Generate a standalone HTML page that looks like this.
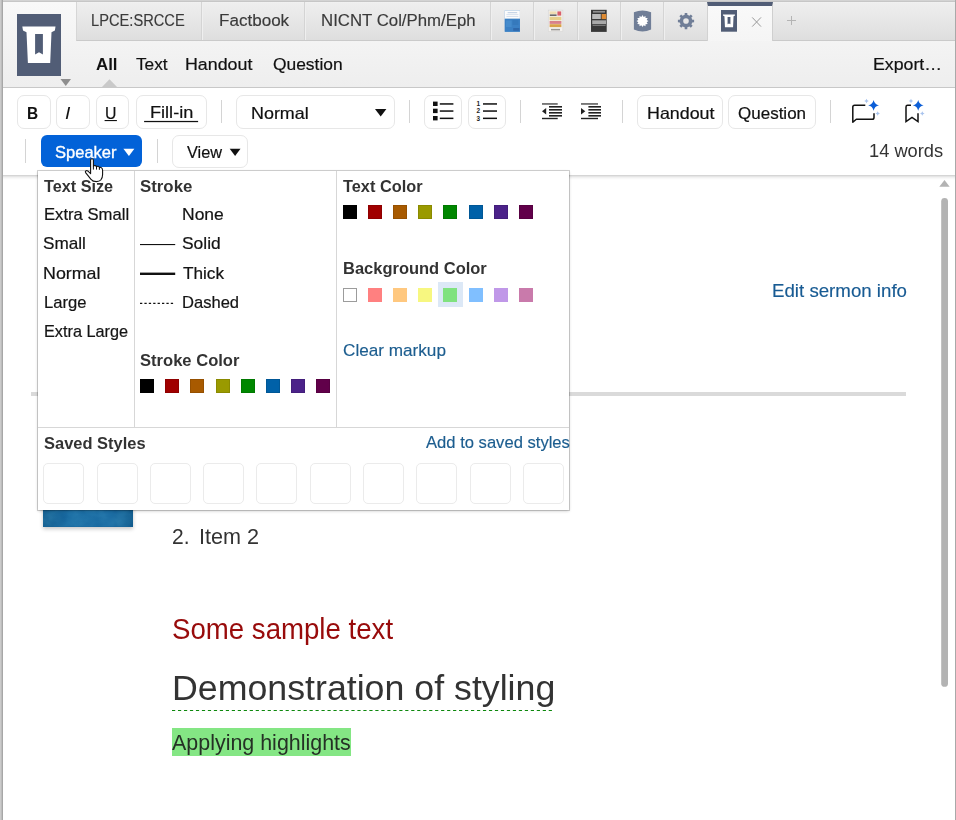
<!DOCTYPE html>
<html lang="en"><head><meta charset="utf-8"><title>Sermon</title>
<style>
html,body{margin:0;padding:0}
body{width:956px;height:820px;overflow:hidden;position:relative;background:#fff;font-family:"Liberation Sans",sans-serif}
.t{position:absolute;white-space:nowrap;line-height:1;transform-origin:0 0;display:block;z-index:20}
.a{position:absolute;box-sizing:border-box}
svg{position:absolute;overflow:visible}
/* window chrome */
#bl{left:0;top:0;width:3px;height:820px;background:linear-gradient(90deg,#d2d2d2 0,#bdbdbd 50%,#9c9c9c 100%);z-index:60}
#bt{left:0;top:0;width:956px;height:2px;background:linear-gradient(#d3d3d3 50%,#c6c6c6 50%);z-index:59}
#br{left:955px;top:0;width:1px;height:820px;background:#a9a9a9;z-index:60}
#hdr{left:3px;top:2px;width:952px;height:86px;background:linear-gradient(#f8f8f8,#eeeeee);border-bottom:1px solid #c8c8c8}
#tabs{left:76px;top:2px;width:879px;height:39px;background:linear-gradient(#f2f2f2 0,#eeeeee 4%,#dedede 100%);border-bottom:1px solid #cacaca;border-left:1px solid #d6d6d6}
.sep{top:2px;width:2px;height:38px;background:linear-gradient(90deg,#d4d4d4 50%,#efefef 50%)}
#atab{left:707px;top:2px;width:66px;height:39px;background:linear-gradient(#f9f9f9,#f5f5f5);border-top:4px solid #515d76;border-left:1px solid #d2d2d2;border-right:1px solid #cfcfcf}
/* toolbar */
.btn{border:1px solid #e7e7e7;border-radius:7px;background:#fff}
.vs{width:1px;background:#d4d4d4}
#tbline{left:3px;top:175px;width:952px;height:5px;background:linear-gradient(#d5d5d5 0,#d5d5d5 20%,#e5e5e5 20%,#e5e5e5 40%,#f1f1f1 40%,#f1f1f1 60%,#f8f8f8 60%,#f8f8f8 80%,#fdfdfd 80%)}
/* panel */
#panel{left:38px;top:171px;width:531px;height:339px;background:#fff;box-shadow:0 0 0 1px rgba(0,0,0,.17),0 1px 3px rgba(0,0,0,.22);z-index:10}
.pl{background:#d7d7d7;z-index:11}
.sw{width:14px;height:14px;z-index:12;box-shadow:inset 0 0 0 1px rgba(0,0,0,.10)}
.sv{width:41px;height:41px;top:463.4px;border:1px solid #ebebeb;border-radius:5px;background:#fff;z-index:12}

</style></head>
<body>
<div class="a" id="hdr"></div>
<div class="a" id="tabs"></div>
<div class="a sep" style="left:201px"></div>
<div class="a sep" style="left:304px"></div>
<div class="a sep" style="left:490px"></div>
<div class="a sep" style="left:533px"></div>
<div class="a sep" style="left:577px"></div>
<div class="a sep" style="left:620px"></div>
<div class="a sep" style="left:663px"></div>
<div class="a" id="atab"></div>
<!-- big app icon -->
<svg width="956" height="100" style="left:0;top:0" viewBox="0 0 956 100">
<rect x="17" y="14" width="44" height="62" fill="#515d76"/>
<path fill="#fff" d="M22.3 26.6H55.5L54.9 30.6L51.5 32.2L50.2 63H27.9L26.5 32.2L23 30.6Z"/><path fill="#515d76" d="M35.1 33.9H42.9V54.6L39 52.3L35.1 54.6Z"/>
<path fill="#8e8e8e" d="M60.5 79H71L65.75 86Z"/>
<path fill="#c9c9c9" d="M102 87L109.5 79.2L117 87Z"/>
<!-- tab book icons -->
<defs><filter id="bk" x="-10%" y="-10%" width="120%" height="120%"><feGaussianBlur stdDeviation=".45"/></filter></defs>
<g filter="url(#bk)">
<rect x="504.8" y="10.4" width="15.1" height="21.3" fill="#3c82c6"/>
<rect x="504.8" y="10.4" width="15.1" height="8.4" fill="#fcfcfc"/>
<rect x="507.6" y="12.2" width="9.6" height="1" fill="#b9cbe2"/><rect x="506.4" y="14.2" width="12" height=".9" fill="#d3deed"/><rect x="506.4" y="16" width="12" height=".9" fill="#d3deed"/>
<rect x="504.8" y="18.8" width="15.1" height="12.9" fill="#3b80c4"/>
<rect x="513.2" y="28" width="6.2" height="2.8" fill="#2e68ab"/><rect x="506" y="20.5" width="5.6" height="6.5" fill="#4f93d3" opacity=".55"/><rect x="512.4" y="20" width="6" height="5" fill="#3374b8" opacity=".6"/>
<rect x="548.2" y="10.1" width="14.7" height="21.6" fill="#f3f1ee" stroke="#cfcfcf" stroke-width=".5"/>
<rect x="549.6" y="11.4" width="7" height="2.6" fill="#efddb2"/><rect x="557.4" y="11.4" width="3.8" height="4.2" fill="#d9616b"/>
<rect x="549.8" y="14.5" width="6.8" height="1.3" fill="#4a4646"/>
<rect x="549.6" y="16.8" width="11.8" height="3.5" fill="#e7cf8a"/>
<rect x="549.6" y="21" width="11.8" height="2.9" fill="#d9818a"/>
<rect x="549.6" y="24.2" width="11.8" height="2.9" fill="#d9a24a"/>
<rect x="551" y="28.9" width="9" height="1.5" fill="#9a9896"/>
<rect x="591" y="9.8" width="15.7" height="22.1" fill="#383838"/>
<rect x="593" y="10.9" width="12" height="1.7" fill="#8f8f8f"/>
<rect x="592.2" y="14" width="8.6" height="5" fill="#b9b9b9"/><rect x="601.6" y="14" width="4.7" height="5.1" fill="#dd8a33"/>
<rect x="592.2" y="20.3" width="13.8" height="3.9" fill="#a9a9a9"/><rect x="592.6" y="25" width="13" height="1" fill="#777"/>
</g>
<!-- shield w/ sun -->
<path fill="#707e97" d="M633.9 12.3Q642.5 8.6 651.1 12.3V29.5Q642.5 33.4 633.9 29.5Z"/>
<path fill="#fff" d="M642.50 15.10 L643.61 16.95 L645.50 15.90 L645.54 18.06 L647.70 18.10 L646.65 19.99 L648.50 21.10 L646.65 22.21 L647.70 24.10 L645.54 24.14 L645.50 26.30 L643.61 25.25 L642.50 27.10 L641.39 25.25 L639.50 26.30 L639.46 24.14 L637.30 24.10 L638.35 22.21 L636.50 21.10 L638.35 19.99 L637.30 18.10 L639.46 18.06 L639.50 15.90 L641.39 16.95Z"/>
<!-- gear -->
<path fill="#707e97" fill-rule="evenodd" d="M684.65 14.79 L684.72 12.95 L687.28 12.95 L687.35 14.79 L689.47 15.67 L690.82 14.42 L692.63 16.23 L691.38 17.58 L692.26 19.70 L694.10 19.77 L694.10 22.33 L692.26 22.40 L691.38 24.52 L692.63 25.87 L690.82 27.68 L689.47 26.43 L687.35 27.31 L687.28 29.15 L684.72 29.15 L684.65 27.31 L682.53 26.43 L681.18 27.68 L679.37 25.87 L680.62 24.52 L679.74 22.40 L677.90 22.33 L677.90 19.77 L679.74 19.70 L680.62 17.58 L679.37 16.23 L681.18 14.42 L682.53 15.67Z M683.20 21.05a2.8 2.8 0 1 0 5.6 0a2.8 2.8 0 1 0 -5.6 0Z"/>
<!-- active tab icon -->
<g transform="translate(721 10) scale(.3636 .35) translate(-17 -14)"><rect x="17" y="14" width="44" height="62" fill="#515d76"/><path fill="#fff" d="M22.3 26.6H55.5L54.9 30.6L51.5 32.2L50.2 63H27.9L26.5 32.2L23 30.6Z"/><path fill="#515d76" d="M35.1 33.9H42.9V54.6L39 52.3L35.1 54.6Z"/></g>
<path stroke="#999" stroke-width="1" fill="none" d="M752.2 17.4L761 26.6M761 17.4L752.2 26.6"/>
<path stroke="#b4b4b4" stroke-width="1" fill="none" d="M787 20.5H796M791.5 16V25"/>
</svg>
<div class="a" id="tbline"></div>
<div class="a btn" style="left:17px;top:95px;width:34px;height:34px"></div>
<div class="a btn" style="left:56px;top:95px;width:34px;height:34px"></div>
<div class="a btn" style="left:96px;top:95px;width:33px;height:34px"></div>
<div class="a btn" style="left:136px;top:95px;width:71px;height:34px"></div>
<div class="a vs" style="left:221px;top:100px;height:23px"></div>
<div class="a btn" style="left:236px;top:95px;width:159px;height:34px"></div>
<div class="a vs" style="left:409px;top:100px;height:23px"></div>
<div class="a btn" style="left:424px;top:95px;width:38px;height:34px"></div>
<div class="a btn" style="left:468px;top:95px;width:38px;height:34px"></div>
<div class="a vs" style="left:520px;top:100px;height:23px"></div>
<div class="a vs" style="left:622px;top:100px;height:23px"></div>
<div class="a btn" style="left:637px;top:95px;width:86px;height:34px"></div>
<div class="a btn" style="left:728px;top:95px;width:88px;height:34px"></div>
<div class="a vs" style="left:830px;top:100px;height:23px"></div>
<div class="a vs" style="left:25px;top:139px;height:24px"></div>
<div class="a" style="left:41px;top:135px;width:100.5px;height:31.6px;background:#0262d8;border-radius:6px"></div>
<div class="a vs" style="left:157px;top:139px;height:24px"></div>
<div class="a btn" style="left:172.4px;top:135px;width:75.4px;height:32.6px"></div>
<svg width="956" height="90" style="left:0;top:90px" viewBox="0 90 956 90">
<!-- U underline, Fill-in underline -->
<rect x="104.6" y="120" width="12.3" height="1.1" fill="#111"/>
<rect x="144.1" y="120.9" width="54" height="1.25" fill="#111"/>
<!-- dropdown arrows -->
<path fill="#111" d="M375 109H386.4L380.7 116.4Z"/>
<path fill="#fff" d="M123.4 148.8H134.4L128.9 156Z"/>
<path fill="#111" d="M229.7 148.8H240.5L235.1 156Z"/>
<!-- bullet list -->
<g fill="#111"><rect x="433" y="101.6" width="4.6" height="4.4"/><rect x="433" y="108.7" width="4.6" height="4.4"/><rect x="433" y="116" width="4.6" height="4.4"/>
<rect x="439.8" y="103.2" width="13.6" height="1.5"/><rect x="439.8" y="110.3" width="13.6" height="1.5"/><rect x="439.8" y="117.6" width="13.6" height="1.5"/>
<!-- numbered list -->
<rect x="483" y="103.2" width="14" height="1.5"/><rect x="483" y="110.3" width="14" height="1.5"/><rect x="483" y="117.6" width="14" height="1.5"/></g>
<g font-family="Liberation Sans, sans-serif" font-weight="bold" font-size="6.4" fill="#222"><text x="476.6" y="106.2">1</text><text x="476.6" y="113.4">2</text><text x="476.6" y="120.6">3</text></g>
<!-- outdent -->
<g fill="#222"><rect x="542" y="103.2" width="15.7" height="1.5" fill="#555"/><rect x="542" y="117.8" width="15.7" height="1.4"/>
<rect x="549" y="106" width="13" height="1.6"/><rect x="549" y="109" width="13" height="1.6"/><rect x="549" y="112" width="13" height="1.6"/><rect x="549" y="115" width="13" height="1.6"/>
<path d="M542 111.3L546.2 108V114.6Z"/>
<!-- indent -->
<rect x="581" y="103.2" width="17" height="1.5" fill="#555"/><rect x="581" y="117.8" width="17" height="1.4"/>
<rect x="588.4" y="106" width="12.6" height="1.6"/><rect x="588.4" y="109" width="12.6" height="1.6"/><rect x="588.4" y="112" width="12.6" height="1.6"/><rect x="588.4" y="115" width="12.6" height="1.6"/>
<path d="M585.3 111.3L581 108V114.6Z"/></g>
<!-- chat + sparkle -->
<path fill="none" stroke="#111" stroke-width="1.5" stroke-linejoin="round" d="M865.3 105.3H854.6Q852.8 105.3 852.8 107.1V122.3L856.3 119.3H872.2Q874 119.3 874 117.5V113.2"/>
<path fill="#0b5ed7" d="M873.6 99.89999999999999Q874.572 104.328 879.0 105.3Q874.572 106.27199999999999 873.6 110.7Q872.628 106.27199999999999 868.2 105.3Q872.628 104.328 873.6 99.89999999999999Z"/><path fill="#a9c4ee" d="M866.5 98.7Q866.914 100.586 868.8 101Q866.914 101.414 866.5 103.3Q866.086 101.414 864.2 101Q866.086 100.586 866.5 98.7Z"/><path fill="#a9c4ee" d="M877.7 111.2Q878.114 113.086 880.0 113.5Q878.114 113.914 877.7 115.8Q877.2860000000001 113.914 875.4000000000001 113.5Q877.2860000000001 113.086 877.7 111.2Z"/>
<!-- bookmark + sparkle -->
<path fill="none" stroke="#111" stroke-width="1.5" stroke-linejoin="miter" d="M911 105.3H907.6Q906 105.3 906 106.9V121.6L912 117.4L918 121.6V113.2"/>
<path fill="#0b5ed7" d="M918.2 99.89999999999999Q919.172 104.328 923.6 105.3Q919.172 106.27199999999999 918.2 110.7Q917.2280000000001 106.27199999999999 912.8000000000001 105.3Q917.2280000000001 104.328 918.2 99.89999999999999Z"/><path fill="#a9c4ee" d="M911 98.7Q911.414 100.586 913.3 101Q911.414 101.414 911 103.3Q910.586 101.414 908.7 101Q910.586 100.586 911 98.7Z"/><path fill="#a9c4ee" d="M922.3 111.2Q922.7139999999999 113.086 924.5999999999999 113.5Q922.7139999999999 113.914 922.3 115.8Q921.886 113.914 920.0 113.5Q921.886 113.086 922.3 111.2Z"/>
</svg>
<!-- document area -->
<div class="a" style="left:31px;top:392px;width:875px;height:3.5px;background:#dadada"></div>
<div class="a" style="left:43px;top:440px;width:90px;height:86.7px;background:#125f96;box-shadow:0 2px 4px rgba(0,0,0,.22)"></div>
<svg width="90" height="87" style="left:43px;top:440px" viewBox="0 0 90 87"><defs><filter id="tx" x="0" y="0" width="100%" height="100%"><feTurbulence type="fractalNoise" baseFrequency=".07 .09" numOctaves="3" seed="7" result="n"/><feColorMatrix in="n" type="matrix" values="0 0 0 0 .07  0 0 0 0 .37  0 0 0 0 .6  .9 .9 0 0 -.38"/><feComposite operator="in" in2="SourceGraphic"/></filter>
<linearGradient id="bg1" x1="0" x2="1"><stop offset="0" stop-color="#0e5688"/><stop offset=".3" stop-color="#15669e"/><stop offset=".75" stop-color="#17679f"/><stop offset="1" stop-color="#0e5789"/></linearGradient></defs>
<rect width="90" height="86.7" fill="url(#bg1)"/><rect width="90" height="86.7" fill="#fff" filter="url(#tx)" opacity=".32"/></svg>
<div class="a" style="left:171.8px;top:727.8px;width:179.7px;height:28.2px;background:#84e684"></div>
<svg width="400" height="4" style="left:172px;top:708px" viewBox="172 708 400 4"><path d="M172 710.5H553.5" stroke="#0d880d" stroke-width="1.2" stroke-dasharray="3.2 2.78" fill="none"/></svg>
<!-- scrollbar -->
<svg width="20" height="520" style="left:936px;top:176px" viewBox="936 176 20 520"><path fill="#b3b3b3" d="M939.3 186.8L944.5 180L949.7 186.8Z"/><rect x="941.2" y="198" width="6.8" height="488.8" rx="3.4" fill="#b3b3b3"/></svg>
<!-- style dropdown panel -->
<div class="a" id="panel"></div>
<div class="a pl" style="left:134px;top:171px;width:1px;height:256px"></div>
<div class="a pl" style="left:336px;top:171px;width:1px;height:256px"></div>
<div class="a pl" style="left:38px;top:427px;width:531px;height:1px"></div>
<div class="a" style="left:438px;top:282px;width:25px;height:25px;background:#dce8f6;z-index:11"></div>
<div class="a sw" style="left:140px;top:379px;background:#000000"></div>
<div class="a sw" style="left:165px;top:379px;background:#a00000"></div>
<div class="a sw" style="left:190px;top:379px;background:#a85a00"></div>
<div class="a sw" style="left:216px;top:379px;background:#9a9a00"></div>
<div class="a sw" style="left:241px;top:379px;background:#008700"></div>
<div class="a sw" style="left:266px;top:379px;background:#0061a8"></div>
<div class="a sw" style="left:291px;top:379px;background:#4b2289"></div>
<div class="a sw" style="left:316px;top:379px;background:#61004a"></div>
<div class="a sw" style="left:343px;top:205px;background:#000000"></div>
<div class="a sw" style="left:368px;top:205px;background:#a00000"></div>
<div class="a sw" style="left:393px;top:205px;background:#a85a00"></div>
<div class="a sw" style="left:418px;top:205px;background:#9a9a00"></div>
<div class="a sw" style="left:443px;top:205px;background:#008700"></div>
<div class="a sw" style="left:469px;top:205px;background:#0061a8"></div>
<div class="a sw" style="left:494px;top:205px;background:#4b2289"></div>
<div class="a sw" style="left:519px;top:205px;background:#61004a"></div>
<div class="a sw" style="left:343px;top:288px;background:#ffffff;border:1px solid #9c9c9c;box-shadow:none"></div>
<div class="a sw" style="left:368px;top:288px;background:#ff8080;box-shadow:none"></div>
<div class="a sw" style="left:393px;top:288px;background:#ffc87f;box-shadow:none"></div>
<div class="a sw" style="left:418px;top:288px;background:#f7f780;box-shadow:none"></div>
<div class="a sw" style="left:443px;top:288px;background:#80e27f;box-shadow:none"></div>
<div class="a sw" style="left:469px;top:288px;background:#80bfff;box-shadow:none"></div>
<div class="a sw" style="left:494px;top:288px;background:#c098e8;box-shadow:none"></div>
<div class="a sw" style="left:519px;top:288px;background:#c97aab;box-shadow:none"></div>
<svg width="40" height="70" style="left:140px;top:240px;z-index:12" viewBox="140 240 40 70">
<rect x="140" y="244" width="35.2" height="1.1" fill="#111"/>
<rect x="140" y="272.6" width="35.2" height="2.4" fill="#111"/>
<path d="M140 303.3H175.2" stroke="#111" stroke-width="1.3" stroke-dasharray="2.3 2.1" fill="none"/>
</svg>
<div class="a sv" style="left:43.3px"></div>
<div class="a sv" style="left:96.6px"></div>
<div class="a sv" style="left:149.8px"></div>
<div class="a sv" style="left:203.1px"></div>
<div class="a sv" style="left:256.4px"></div>
<div class="a sv" style="left:309.7px"></div>
<div class="a sv" style="left:362.9px"></div>
<div class="a sv" style="left:416.2px"></div>
<div class="a sv" style="left:469.5px"></div>
<div class="a sv" style="left:522.7px"></div>
<!-- hand cursor -->
<svg width="22" height="26" style="left:84px;top:157px;z-index:50" viewBox="84 157 22 26">
<path fill="#fff" stroke="#111" stroke-width="1.1" stroke-linejoin="round" d="M90.6 160.2Q90.6 158.8 92 158.8Q93.4 158.8 93.4 160.2V166.6Q94 165.4 95.2 165.6Q96.4 165.8 96.5 167Q97.1 166 98.2 166.3Q99.3 166.6 99.4 167.8Q100 167 101 167.4Q102.6 168 102.6 170.2V174.5Q102.6 178 100.8 180Q99.3 181.6 96.3 181.6Q92.8 181.6 91 179.4L85.6 172.6Q85 171.6 85.8 170.9Q86.8 170.1 88 171.2L90.6 173.6Z"/>
<path stroke="#111" stroke-width="1" fill="none" d="M93.4 166.6V169.6M96.5 167V169.6M99.4 167.8V169.8"/>
</svg>
<span class="t" style="left:91.27px;top:13px;font-size:16.90px;color:#3a3a3a;-webkit-text-stroke:.15px #3a3a3a;transform:scaleX(0.8682)">LPCE:SRCCE</span>
<span class="t" style="left:218.86px;top:13px;font-size:16.90px;color:#3a3a3a;-webkit-text-stroke:.15px #3a3a3a;transform:scaleX(1.0095)">Factbook</span>
<span class="t" style="left:320.96px;top:13px;font-size:16.90px;color:#3a3a3a;-webkit-text-stroke:.15px #3a3a3a;transform:scaleX(0.9942)">NICNT Col/Phm/Eph</span>
<span class="t" style="left:95.90px;top:57px;font-size:16.76px;font-weight:bold;color:#111;transform:scaleX(1.0067)">All</span>
<span class="t" style="left:135.69px;top:57px;font-size:16.76px;color:#111;-webkit-text-stroke:.2px #111;transform:scaleX(1.0287)">Text</span>
<span class="t" style="left:185.46px;top:57px;font-size:16.76px;color:#111;-webkit-text-stroke:.2px #111;transform:scaleX(1.0637)">Handout</span>
<span class="t" style="left:272.62px;top:57px;font-size:16.76px;color:#111;-webkit-text-stroke:.2px #111;transform:scaleX(1.0382)">Question</span>
<span class="t" style="left:872.86px;top:57px;font-size:16.76px;color:#111;-webkit-text-stroke:.2px #111;transform:scaleX(1.0590)">Export…</span>
<span class="t" style="left:26.76px;top:105px;font-size:16.06px;font-weight:bold;color:#111;transform:scaleX(0.9636)">B</span>
<span class="t" style="left:64.97px;top:105px;font-size:16.06px;font-style:italic;color:#111;transform:scaleX(1.2001)">I</span>
<span class="t" style="left:104.60px;top:105px;font-size:16.06px;color:#111;-webkit-text-stroke:.2px #111;transform:scaleX(0.9864)">U</span>
<span class="t" style="left:149.59px;top:104px;font-size:16.48px;color:#111;-webkit-text-stroke:.2px #111;transform:scaleX(1.1004)">Fill-in</span>
<span class="t" style="left:250.83px;top:105px;font-size:16.48px;color:#111;-webkit-text-stroke:.2px #111;transform:scaleX(1.0872)">Normal</span>
<span class="t" style="left:646.64px;top:105px;font-size:16.48px;color:#111;-webkit-text-stroke:.2px #111;transform:scaleX(1.0838)">Handout</span>
<span class="t" style="left:738.46px;top:105px;font-size:16.48px;color:#111;-webkit-text-stroke:.2px #111;transform:scaleX(1.0322)">Question</span>
<span class="t" style="left:55.49px;top:144px;font-size:16.20px;color:#fff;-webkit-text-stroke:.35px #fff;transform:scaleX(1.0204)">Speaker</span>
<span class="t" style="left:186.91px;top:144px;font-size:16.48px;color:#111;-webkit-text-stroke:.2px #111;transform:scaleX(0.9895)">View</span>
<span class="t" style="left:869.49px;top:142px;font-size:18.16px;color:#333;transform:scaleX(1.0057)">14 words</span>
<span class="t" style="left:44.06px;top:179px;font-size:15.92px;font-weight:bold;color:#333;transform:scaleX(1.0193)">Text Size</span>
<span class="t" style="left:43.53px;top:206px;font-size:16.20px;color:#141414;-webkit-text-stroke:.2px #141414;transform:scaleX(1.0287)">Extra Small</span>
<span class="t" style="left:43.45px;top:235px;font-size:16.20px;color:#141414;-webkit-text-stroke:.2px #141414;transform:scaleX(1.0606)">Small</span>
<span class="t" style="left:43.21px;top:265px;font-size:16.20px;color:#141414;-webkit-text-stroke:.2px #141414;transform:scaleX(1.1019)">Normal</span>
<span class="t" style="left:43.54px;top:294px;font-size:16.20px;color:#141414;-webkit-text-stroke:.2px #141414;transform:scaleX(1.0258)">Large</span>
<span class="t" style="left:43.64px;top:323px;font-size:16.20px;color:#141414;-webkit-text-stroke:.2px #141414;transform:scaleX(1.0044)">Extra Large</span>
<span class="t" style="left:139.86px;top:179px;font-size:15.92px;font-weight:bold;color:#333;transform:scaleX(1.0578)">Stroke</span>
<span class="t" style="left:181.73px;top:206px;font-size:16.20px;color:#141414;-webkit-text-stroke:.2px #141414;transform:scaleX(1.0804)">None</span>
<span class="t" style="left:182.08px;top:235px;font-size:16.20px;color:#141414;-webkit-text-stroke:.2px #141414;transform:scaleX(1.0762)">Solid</span>
<span class="t" style="left:183.14px;top:265px;font-size:16.20px;color:#141414;-webkit-text-stroke:.2px #141414;transform:scaleX(1.0612)">Thick</span>
<span class="t" style="left:181.95px;top:294px;font-size:16.20px;color:#141414;-webkit-text-stroke:.2px #141414;transform:scaleX(1.0225)">Dashed</span>
<span class="t" style="left:140.27px;top:353px;font-size:15.92px;font-weight:bold;color:#333;transform:scaleX(1.0416)">Stroke Color</span>
<span class="t" style="left:343.46px;top:179px;font-size:15.92px;font-weight:bold;color:#333;transform:scaleX(1.0262)">Text Color</span>
<span class="t" style="left:342.53px;top:261px;font-size:15.92px;font-weight:bold;color:#333;transform:scaleX(1.0362)">Background Color</span>
<span class="t" style="left:342.53px;top:342px;font-size:16.20px;color:#1c5d8f;-webkit-text-stroke:.15px #1c5d8f;transform:scaleX(1.0593)">Clear markup</span>
<span class="t" style="left:44.07px;top:436px;font-size:15.92px;font-weight:bold;color:#333;transform:scaleX(1.0345)">Saved Styles</span>
<span class="t" style="left:426.23px;top:434px;font-size:16.20px;color:#1c5d8f;-webkit-text-stroke:.15px #1c5d8f;transform:scaleX(1.0251)">Add to saved styles</span>
<span class="t" style="left:772.09px;top:282px;font-size:18.16px;color:#185b93;-webkit-text-stroke:.15px #185b93;transform:scaleX(1.0290)">Edit sermon info</span>
<span class="t" style="left:171.73px;top:526px;font-size:21.65px;color:#333;transform:scaleX(0.9711)">2.</span>
<span class="t" style="left:199.13px;top:526px;font-size:21.65px;color:#333;transform:scaleX(0.9988)">Item 2</span>
<span class="t" style="left:171.73px;top:615px;font-size:29.05px;color:#980b0b;transform:scaleX(0.9509)">Some sample text</span>
<span class="t" style="left:171.82px;top:671px;font-size:34.64px;color:#333;transform:scaleX(1.0320)">Demonstration of styling</span>
<span class="t" style="left:172.47px;top:732px;font-size:21.65px;color:#253025;transform:scaleX(0.9907)">Applying highlights</span>
<div class="a" id="bl"></div><div class="a" id="bt"></div><div class="a" id="br"></div>

</body></html>
